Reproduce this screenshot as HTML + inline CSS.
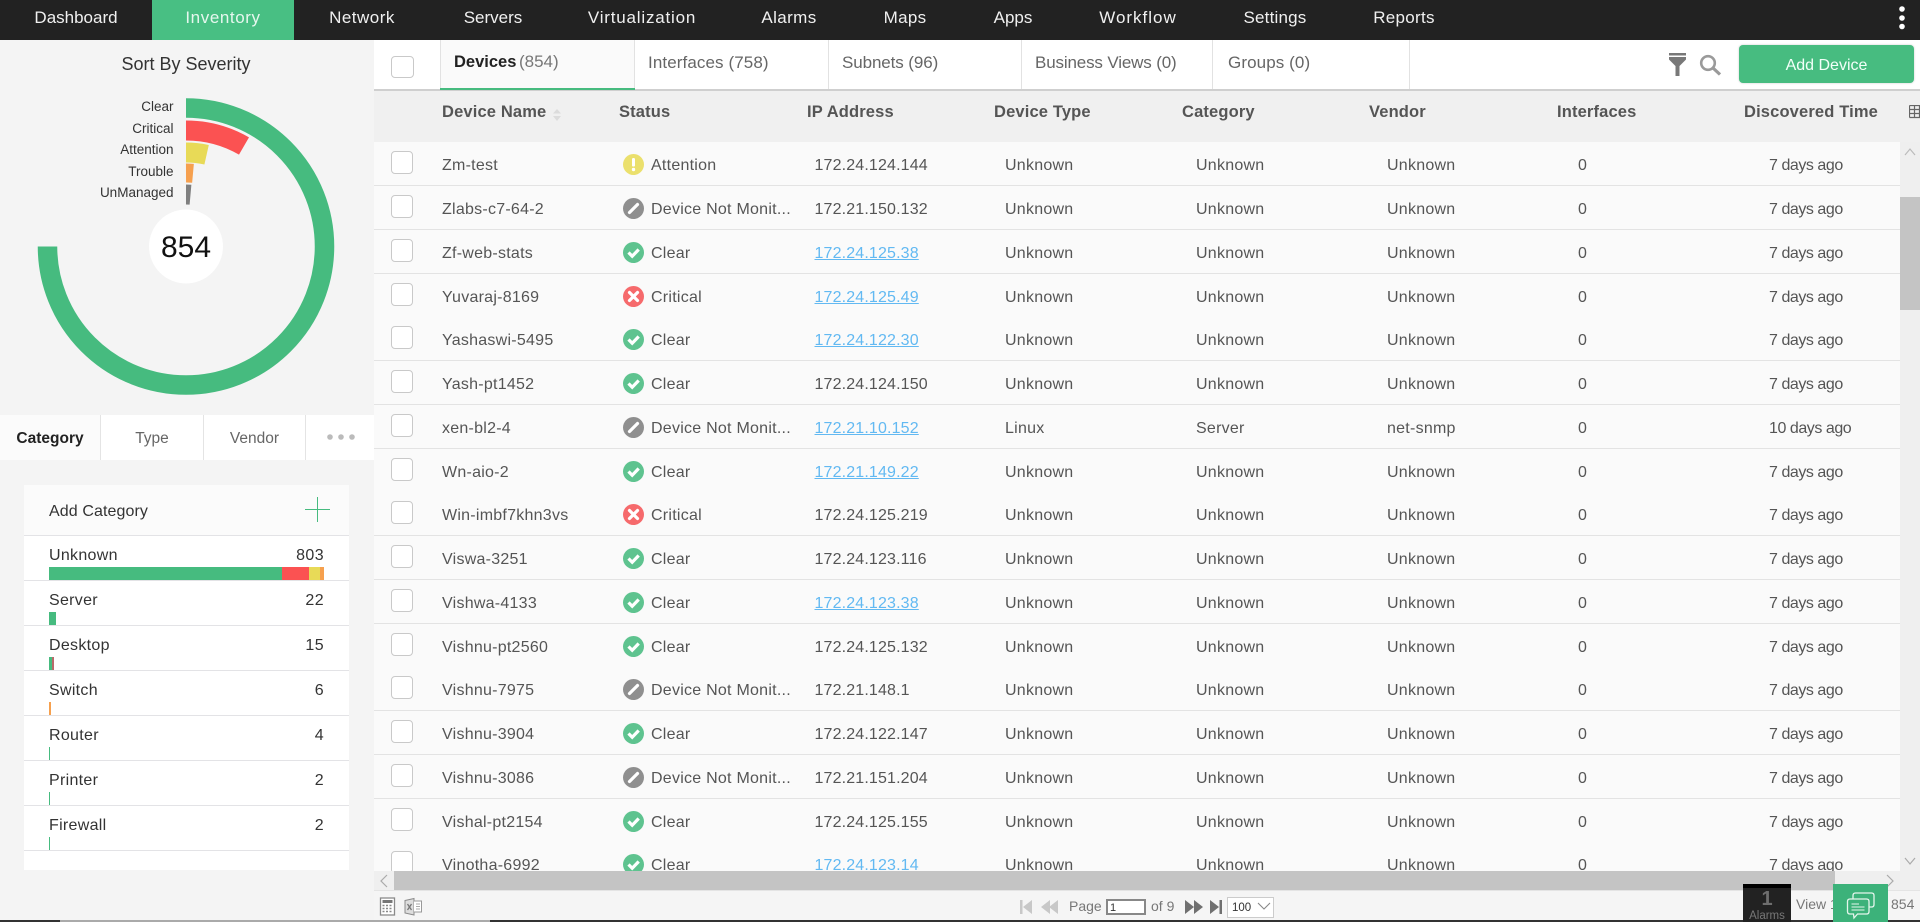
<!DOCTYPE html>
<html><head><meta charset="utf-8"><title>Inventory</title>
<style>
*{box-sizing:border-box}
html,body{margin:0;padding:0;width:1920px;height:922px;overflow:hidden;background:#f4f4f4;font-family:"Liberation Sans",sans-serif;color:#555}
.a{position:absolute}
.n{position:absolute;top:0;height:40px;line-height:36px;font-size:17px;color:#f0f0f0;transform:translateX(-50%);white-space:nowrap}
.l{position:absolute;right:1746.5px;font-size:13.5px;line-height:16px;color:#333;white-space:nowrap}
.t{position:absolute;top:40px;height:49px;border-right:1px solid #e2e2e2;font-size:17px;line-height:45px;color:#666;padding-left:13px;letter-spacing:.1px;white-space:nowrap}
.h{position:absolute;top:91px;line-height:42px;font-size:16.5px;font-weight:bold;color:#555;letter-spacing:.15px;white-space:nowrap}
.r{position:absolute;left:374px;width:1526px;height:44px;background:#fafafa;border-bottom:1px solid #e3e3e3;font-size:16px;line-height:47px;color:#555;letter-spacing:.25px}
.r span{position:absolute;top:0;white-space:nowrap}
.r i{position:absolute;left:17px;top:9px;width:22px;height:23px;border:1px solid #c9c9c9;border-radius:4px;background:#fff}
.r svg{position:absolute;left:249px;top:12px;width:21px;height:21px}
.c1{left:68px}.c2{left:277px}.c3{left:440.5px;letter-spacing:.15px}.c4{left:631px}.c5{left:822px}.c6{left:1013px}.c7{left:1204px}.c8{left:1395px;letter-spacing:-.45px}
.r a{color:#62b9f2;text-decoration:underline}
.cat{position:absolute;left:49px;font-size:16px;line-height:20px;color:#333;letter-spacing:.3px}
.val{position:absolute;right:1596px;font-size:16px;line-height:20px;color:#333;letter-spacing:.4px}
.ln{position:absolute;left:24px;width:325px;height:1px;background:#e3e3e6}
</style></head>
<body>
<svg width="0" height="0" style="position:absolute">
<symbol id="at" viewBox="0 0 21 21"><circle cx="10.5" cy="10.5" r="10.5" fill="#ebe06d"/><rect x="9" y="4" width="3" height="8.5" rx="1.3" fill="#fff"/><circle cx="10.5" cy="15.5" r="1.7" fill="#fff"/></symbol>
<symbol id="dn" viewBox="0 0 21 21"><circle cx="10.5" cy="10.5" r="10.5" fill="#8f8f8f"/><path d="M6.5 14.5L14.5 6.5" stroke="#fff" stroke-width="3.2" stroke-linecap="round"/></symbol>
<symbol id="ok" viewBox="0 0 21 21"><circle cx="10.5" cy="10.5" r="10.5" fill="#5ec38f"/><path d="M5.5 10.5L9.2 14.2L15.7 7.5" fill="none" stroke="#fff" stroke-width="3.2"/></symbol>
<symbol id="cr" viewBox="0 0 21 21"><circle cx="10.5" cy="10.5" r="10.5" fill="#f66a6c"/><path d="M6.5 6.5L14.5 14.5M14.5 6.5L6.5 14.5" stroke="#fff" stroke-width="3.2" stroke-linecap="round"/></symbol>
</svg>

<!-- top nav -->
<div class="a" style="left:0;top:0;width:1920px;height:40px;background:#222"></div>
<div class="a" style="left:152px;top:0;width:142px;height:40px;background:#48bf83"></div>
<div class="n" style="left:76px">Dashboard</div>
<div class="n" style="left:223px;color:#e6f7ee;letter-spacing:.6px">Inventory</div>
<div class="n" style="left:362px;letter-spacing:.5px">Network</div>
<div class="n" style="left:493px">Servers</div>
<div class="n" style="left:642px;letter-spacing:.8px">Virtualization</div>
<div class="n" style="left:789px;letter-spacing:.4px">Alarms</div>
<div class="n" style="left:905px;letter-spacing:.3px">Maps</div>
<div class="n" style="left:1013px">Apps</div>
<div class="n" style="left:1138px;letter-spacing:1px">Workflow</div>
<div class="n" style="left:1275px;letter-spacing:.2px">Settings</div>
<div class="n" style="left:1404px;letter-spacing:.3px">Reports</div>
<svg class="a" style="left:1896px;top:5px" width="12" height="26"><circle cx="6" cy="4" r="2.8" fill="#fff"/><circle cx="6" cy="13" r="2.8" fill="#fff"/><circle cx="6" cy="21.500" r="2.8" fill="#fff"/></svg>

<!-- left panel -->
<div class="a" style="left:0;top:40px;width:374px;height:882px;background:#f4f4f4"></div>
<div class="a" style="left:0;top:52px;width:372px;text-align:center;font-size:18px;line-height:24px;color:#333">Sort By Severity</div>
<svg class="a" style="left:0;top:40px" width="374" height="375">
<g transform="translate(186,206.500)" fill="none">
<path d="M0 -138.500A138.500 138.500 0 1 1 -138.500 0" stroke="#46bb7f" stroke-width="19.500"/>
<path d="M0 -116A116 116 0 0 1 58 -100.500" stroke="#fb5252" stroke-width="20"/>
<path d="M0 -94A94 94 0 0 1 20.600 -91.700" stroke="#e8da57" stroke-width="20"/>
<path d="M0 -73.500A73.500 73.500 0 0 1 7 -73.200" stroke="#f6a04e" stroke-width="19"/>
<path d="M0 -52A52 52 0 0 1 4.500 -51.800" stroke="#7f7f7f" stroke-width="20"/>
<circle cx="0" cy="0" r="37" fill="#fff"/>
</g>
</svg>
<div class="a" style="left:116px;top:230px;width:140px;text-align:center;font-size:30px;line-height:36px;color:#111">854</div>
<div class="l" style="top:99px">Clear</div>
<div class="l" style="top:121px">Critical</div>
<div class="l" style="top:142px">Attention</div>
<div class="l" style="top:164px">Trouble</div>
<div class="l" style="top:185px">UnManaged</div>

<!-- left tabs -->
<div class="a" style="left:0;top:415px;width:374px;height:45px;background:#fff;font-size:15.500px;line-height:48px;color:#666;text-align:center">
<div class="a" style="left:0;top:0;width:101px;height:45px;background:#fbfbfb;border-right:1px solid #e4e4e4;font-weight:bold;color:#222">Category</div>
<div class="a" style="left:101px;top:0;width:103px;height:45px;border-right:1px solid #e4e4e4">Type</div>
<div class="a" style="left:204px;top:0;width:102px;height:45px;border-right:1px solid #e4e4e4">Vendor</div>
<svg class="a" style="left:325px;top:17px" width="32" height="10"><circle cx="5" cy="5" r="2.800" fill="#bbb"/><circle cx="16" cy="5" r="2.800" fill="#bbb"/><circle cx="27" cy="5" r="2.800" fill="#bbb"/></svg>
</div>

<!-- category card -->
<div class="a" style="left:24px;top:485px;width:325px;height:385px;background:#fff"></div>
<div class="a" style="left:24px;top:485px;width:325px;height:50px;background:#fbfbfb"></div>
<div class="cat" style="top:502px;letter-spacing:.1px">Add Category</div>
<div class="a" style="left:305px;top:509px;width:25px;height:1px;background:#46bb7f"></div>
<div class="a" style="left:317px;top:497px;width:1px;height:25px;background:#46bb7f"></div>
<div class="ln" style="top:535px"></div><div class="ln" style="top:580px"></div><div class="ln" style="top:625px"></div><div class="ln" style="top:670px"></div><div class="ln" style="top:715px"></div><div class="ln" style="top:760px"></div><div class="ln" style="top:805px"></div><div class="ln" style="top:850px"></div>

<div class="cat" style="top:546px">Unknown</div><div class="val" style="top:546px">803</div>
<div class="a" style="left:49px;top:567px;width:233px;height:13px;background:#46bb7f"></div>
<div class="a" style="left:282px;top:567px;width:27px;height:13px;background:#fb5252"></div>
<div class="a" style="left:309px;top:567px;width:11px;height:13px;background:#e8da57"></div>
<div class="a" style="left:320px;top:567px;width:4px;height:13px;background:#f6a04e"></div>

<div class="cat" style="top:591px">Server</div><div class="val" style="top:591px">22</div>
<div class="a" style="left:49px;top:612px;width:7px;height:13px;background:#46bb7f"></div>

<div class="cat" style="top:636px">Desktop</div><div class="val" style="top:636px">15</div>
<div class="a" style="left:49px;top:657px;width:3px;height:13px;background:#46bb7f"></div>
<div class="a" style="left:52px;top:657px;width:2px;height:13px;background:#b9696a"></div>

<div class="cat" style="top:681px">Switch</div><div class="val" style="top:681px">6</div>
<div class="a" style="left:49px;top:702px;width:2px;height:13px;background:#f6a04e"></div>

<div class="cat" style="top:726px">Router</div><div class="val" style="top:726px">4</div>
<div class="a" style="left:49px;top:747px;width:1px;height:13px;background:#46bb7f"></div>

<div class="cat" style="top:771px">Printer</div><div class="val" style="top:771px">2</div>
<div class="a" style="left:49px;top:792px;width:1px;height:13px;background:#46bb7f"></div>

<div class="cat" style="top:816px">Firewall</div><div class="val" style="top:816px">2</div>
<div class="a" style="left:49px;top:837px;width:1px;height:13px;background:#46bb7f"></div>

<!-- main top bar -->
<div class="a" style="left:374px;top:40px;width:1546px;height:49px;background:#fff"></div>
<div class="a" style="left:374px;top:89px;width:1546px;height:2px;background:#cfcfcf"></div>
<div class="a" style="left:391px;top:56px;width:23px;height:22px;border:1px solid #c9c9c9;border-radius:4px;background:#fff"></div>
<div class="a" style="left:440px;top:40px;width:195px;height:49px;background:#fafafa;border-left:1px solid #e2e2e2;border-right:1px solid #e2e2e2;font-size:16.500px;line-height:44px;padding-left:13px;color:#222;font-weight:bold;white-space:nowrap;word-spacing:-2px">Devices <span style="font-weight:normal;color:#777;font-size:17px">(854)</span></div>
<div class="a" style="left:440px;top:88px;width:195px;height:2px;background:#46bb7f"></div>
<div class="t" style="left:635px;width:194px">Interfaces (758)</div>
<div class="t" style="left:829px;width:193px;letter-spacing:-.1px">Subnets (96)</div>
<div class="t" style="left:1022px;width:191px;letter-spacing:-.15px">Business Views (0)</div>
<div class="t" style="left:1213px;width:197px;padding-left:15px">Groups (0)</div>
<svg class="a" style="left:1666px;top:52px" width="22" height="25"><path d="M3 1H20V3.500H3ZM3 5H20V7.500L13.500 14V24H9.500V14L3 7.500Z" fill="#787878"/></svg>
<svg class="a" style="left:1698px;top:53px" width="24" height="24"><circle cx="10" cy="10" r="6.800" fill="none" stroke="#9a9a9a" stroke-width="2.600"/><path d="M15 15L22 21.500" stroke="#9a9a9a" stroke-width="3.200"/></svg>
<div class="a" style="left:1739px;top:45px;width:175px;height:38px;background:#47bc80;border-radius:4px;color:#f2fff8;font-size:16px;line-height:41px;text-align:center;box-shadow:0 0 2px #ccc">Add Device</div>

<!-- header -->
<div class="a" style="left:374px;top:91px;width:1546px;height:51px;background:#f0f0f0"></div>
<div class="h" style="left:442px">Device Name</div>
<svg class="a" style="left:552px;top:108px" width="10" height="14"><path d="M5 1L9 5.500H1ZM5 13L9 8H1Z" fill="#dcdcdc"/></svg>
<div class="h" style="left:619px">Status</div>
<div class="h" style="left:807px">IP Address</div>
<div class="h" style="left:994px">Device Type</div>
<div class="h" style="left:1182px">Category</div>
<div class="h" style="left:1369px">Vendor</div>
<div class="h" style="left:1557px">Interfaces</div>
<div class="h" style="left:1744px">Discovered Time</div>
<svg class="a" style="left:1909px;top:105px" width="11" height="14"><path d="M.5.500H11M.5 4.500H11M.5 8.500H11M.5 12.500H11M.5.500V12.500M5.500.500V12.500M10.500.500V12.500" fill="none" stroke="#666" stroke-width="1.200"/></svg>

<!-- rows -->
<div class="r" style="top:142px"><i></i><span class="c1">Zm-test</span><svg><use href="#at"/></svg><span class="c2">Attention</span><span class="c3">172.24.124.144</span><span class="c4">Unknown</span><span class="c5">Unknown</span><span class="c6">Unknown</span><span class="c7">0</span><span class="c8">7 days ago</span></div>
<div class="r" style="top:186px"><i></i><span class="c1">Zlabs-c7-64-2</span><svg><use href="#dn"/></svg><span class="c2">Device Not Monit...</span><span class="c3">172.21.150.132</span><span class="c4">Unknown</span><span class="c5">Unknown</span><span class="c6">Unknown</span><span class="c7">0</span><span class="c8">7 days ago</span></div>
<div class="r" style="top:230px"><i></i><span class="c1">Zf-web-stats</span><svg><use href="#ok"/></svg><span class="c2">Clear</span><span class="c3"><a>172.24.125.38</a></span><span class="c4">Unknown</span><span class="c5">Unknown</span><span class="c6">Unknown</span><span class="c7">0</span><span class="c8">7 days ago</span></div>
<div class="r" style="top:274px"><i></i><span class="c1">Yuvaraj-8169</span><svg><use href="#cr"/></svg><span class="c2">Critical</span><span class="c3"><a>172.24.125.49</a></span><span class="c4">Unknown</span><span class="c5">Unknown</span><span class="c6">Unknown</span><span class="c7">0</span><span class="c8">7 days ago</span></div>
<div class="r" style="top:317px"><i></i><span class="c1">Yashaswi-5495</span><svg><use href="#ok"/></svg><span class="c2">Clear</span><span class="c3"><a>172.24.122.30</a></span><span class="c4">Unknown</span><span class="c5">Unknown</span><span class="c6">Unknown</span><span class="c7">0</span><span class="c8">7 days ago</span></div>
<div class="r" style="top:361px"><i></i><span class="c1">Yash-pt1452</span><svg><use href="#ok"/></svg><span class="c2">Clear</span><span class="c3">172.24.124.150</span><span class="c4">Unknown</span><span class="c5">Unknown</span><span class="c6">Unknown</span><span class="c7">0</span><span class="c8">7 days ago</span></div>
<div class="r" style="top:405px"><i></i><span class="c1">xen-bl2-4</span><svg><use href="#dn"/></svg><span class="c2">Device Not Monit...</span><span class="c3"><a>172.21.10.152</a></span><span class="c4">Linux</span><span class="c5">Server</span><span class="c6">net-snmp</span><span class="c7">0</span><span class="c8">10 days ago</span></div>
<div class="r" style="top:449px"><i></i><span class="c1">Wn-aio-2</span><svg><use href="#ok"/></svg><span class="c2">Clear</span><span class="c3"><a>172.21.149.22</a></span><span class="c4">Unknown</span><span class="c5">Unknown</span><span class="c6">Unknown</span><span class="c7">0</span><span class="c8">7 days ago</span></div>
<div class="r" style="top:492px"><i></i><span class="c1">Win-imbf7khn3vs</span><svg><use href="#cr"/></svg><span class="c2">Critical</span><span class="c3">172.24.125.219</span><span class="c4">Unknown</span><span class="c5">Unknown</span><span class="c6">Unknown</span><span class="c7">0</span><span class="c8">7 days ago</span></div>
<div class="r" style="top:536px"><i></i><span class="c1">Viswa-3251</span><svg><use href="#ok"/></svg><span class="c2">Clear</span><span class="c3">172.24.123.116</span><span class="c4">Unknown</span><span class="c5">Unknown</span><span class="c6">Unknown</span><span class="c7">0</span><span class="c8">7 days ago</span></div>
<div class="r" style="top:580px"><i></i><span class="c1">Vishwa-4133</span><svg><use href="#ok"/></svg><span class="c2">Clear</span><span class="c3"><a>172.24.123.38</a></span><span class="c4">Unknown</span><span class="c5">Unknown</span><span class="c6">Unknown</span><span class="c7">0</span><span class="c8">7 days ago</span></div>
<div class="r" style="top:624px"><i></i><span class="c1">Vishnu-pt2560</span><svg><use href="#ok"/></svg><span class="c2">Clear</span><span class="c3">172.24.125.132</span><span class="c4">Unknown</span><span class="c5">Unknown</span><span class="c6">Unknown</span><span class="c7">0</span><span class="c8">7 days ago</span></div>
<div class="r" style="top:667px"><i></i><span class="c1">Vishnu-7975</span><svg><use href="#dn"/></svg><span class="c2">Device Not Monit...</span><span class="c3">172.21.148.1</span><span class="c4">Unknown</span><span class="c5">Unknown</span><span class="c6">Unknown</span><span class="c7">0</span><span class="c8">7 days ago</span></div>
<div class="r" style="top:711px"><i></i><span class="c1">Vishnu-3904</span><svg><use href="#ok"/></svg><span class="c2">Clear</span><span class="c3">172.24.122.147</span><span class="c4">Unknown</span><span class="c5">Unknown</span><span class="c6">Unknown</span><span class="c7">0</span><span class="c8">7 days ago</span></div>
<div class="r" style="top:755px"><i></i><span class="c1">Vishnu-3086</span><svg><use href="#dn"/></svg><span class="c2">Device Not Monit...</span><span class="c3">172.21.151.204</span><span class="c4">Unknown</span><span class="c5">Unknown</span><span class="c6">Unknown</span><span class="c7">0</span><span class="c8">7 days ago</span></div>
<div class="r" style="top:799px"><i></i><span class="c1">Vishal-pt2154</span><svg><use href="#ok"/></svg><span class="c2">Clear</span><span class="c3">172.24.125.155</span><span class="c4">Unknown</span><span class="c5">Unknown</span><span class="c6">Unknown</span><span class="c7">0</span><span class="c8">7 days ago</span></div>
<div class="r" style="top:842px"><i></i><span class="c1">Vinotha-6992</span><svg><use href="#ok"/></svg><span class="c2">Clear</span><span class="c3"><a>172.24.123.14</a></span><span class="c4">Unknown</span><span class="c5">Unknown</span><span class="c6">Unknown</span><span class="c7">0</span><span class="c8">7 days ago</span></div>

<!-- vertical scrollbar -->
<div class="a" style="left:1900px;top:142px;width:20px;height:729px;background:#efefef"></div>
<div class="a" style="left:1900px;top:197px;width:20px;height:113px;background:#c4c4c4"></div>
<svg class="a" style="left:1904px;top:147px" width="12" height="10"><path d="M1 8L6 2L11 8" fill="none" stroke="#bbb" stroke-width="1.200"/></svg>
<svg class="a" style="left:1904px;top:856px" width="12" height="10"><path d="M1 2L6 8L11 2" fill="none" stroke="#aaa" stroke-width="1.200"/></svg>

<!-- horizontal scrollbar -->
<div class="a" style="left:374px;top:871px;width:1546px;height:19px;background:#efefef"></div>
<div class="a" style="left:394px;top:871px;width:1441px;height:19px;background:#c4c4c4"></div>
<svg class="a" style="left:379px;top:874px" width="10" height="14"><path d="M8 1L2 7L8 13" fill="none" stroke="#aaa" stroke-width="1.200"/></svg>
<svg class="a" style="left:1885px;top:874px" width="10" height="14"><path d="M2 1L8 7L2 13" fill="none" stroke="#aaa" stroke-width="1.200"/></svg>

<!-- bottom bar -->
<div class="a" style="left:374px;top:890px;width:1546px;height:30px;background:#f5f5f5;border-top:1px solid #e4e4e4"></div>
<div class="a" style="left:0;top:920px;width:60px;height:2px;background:#333"></div>
<div class="a" style="left:60px;top:920px;width:430px;height:2px;background:#aaa"></div>
<div class="a" style="left:490px;top:920px;width:1430px;height:2px;background:#333"></div>
<svg class="a" style="left:379px;top:897px" width="18" height="20"><rect x="1.500" y="1" width="14" height="17" fill="#fff" stroke="#8a8a8a" stroke-width="1.300"/><rect x="3.500" y="3" width="10" height="3" fill="#777"/><path d="M3.500 8.500H13.500M3.500 11.500H13.500M3.500 14.500H13.500" stroke="#888" stroke-width="1.500" stroke-dasharray="2 1.500"/></svg>
<svg class="a" style="left:404px;top:897px" width="20" height="20"><path d="M1 3.500L10 1.500V18L1 16Z" fill="#ddd" stroke="#8a8a8a"/><path d="M10 4H17.500V15H10" fill="#fff" stroke="#999"/><path d="M3.500 7L7.500 13M7.500 7L3.500 13" stroke="#777" stroke-width="1.300"/><path d="M12 7H16M12 9.500H16M12 12H16" stroke="#aaa"/></svg>

<!-- pager -->
<svg class="a" style="left:1019px;top:899px" width="40" height="16"><path d="M1 1H3.500V15H1ZM13 1V15L4 8ZM31 1V15L22 8ZM39 1V15L30 8Z" fill="#c8c8c8"/></svg>
<div class="a" style="left:1069px;top:897px;font-size:14px;line-height:18px;color:#777">Page</div>
<div class="a" style="left:1106px;top:899px;width:40px;height:16px;border:2px solid #888;background:#fff;font-size:11px;line-height:14px;padding-left:2px;color:#333">1</div>
<div class="a" style="left:1151px;top:897px;font-size:14px;line-height:18px;color:#777">of 9</div>
<svg class="a" style="left:1184px;top:899px" width="40" height="16"><path d="M1 1L10 8L1 15ZM10 1L19 8L10 15ZM26 1L35 8L26 15ZM35.500 1H38V15H35.500Z" fill="#707070"/></svg>
<div class="a" style="left:1227px;top:897px;width:47px;height:21px;border:1px solid #ccc;background:#fff;font-size:11.500px;line-height:21px;padding-left:4px;color:#333">100</div>
<svg class="a" style="left:1257px;top:902px" width="14" height="9"><path d="M1 1L7 7L13 1" fill="none" stroke="#888" stroke-width="1.100"/></svg>

<!-- alarms -->
<div class="a" style="left:1743px;top:884px;width:48px;height:38px;background:#222;border-top:4px solid #000;text-align:center">
<div style="font-size:20px;font-weight:bold;line-height:20px;margin-top:1px;color:#6e6e6e">1</div>
<div style="font-size:11.500px;line-height:12px;color:#777;margin-top:1px">Alarms</div>
</div>
<div class="a" style="left:1796px;top:895px;font-size:14px;line-height:18px;color:#777">View 1</div>
<div class="a" style="left:1833px;top:884px;width:55px;height:38px;background:#3cb27a"></div>
<svg class="a" style="left:1846px;top:892px" width="30" height="28" fill="none" stroke="#e4f5ec" stroke-width="1.300"><path d="M7 7V3.500Q7 1 9.500 1H25.500Q28 1 28 3.500V12.500Q28 15 25.500 15H23"/><path d="M4 7H20.500Q23 7 23 9.500V19.500Q23 22 20.500 22H11.500L8 26L7.500 22H4Q1.500 22 1.500 19.500V9.500Q1.500 7 4 7Z" fill="#3cb27a"/><path d="M5.500 12H13M5.500 15H18.500M5.500 18H18.500" stroke-width="1.100"/></svg>
<div class="a" style="left:1891px;top:895px;font-size:14px;line-height:18px;color:#777">854</div>
</body></html>
